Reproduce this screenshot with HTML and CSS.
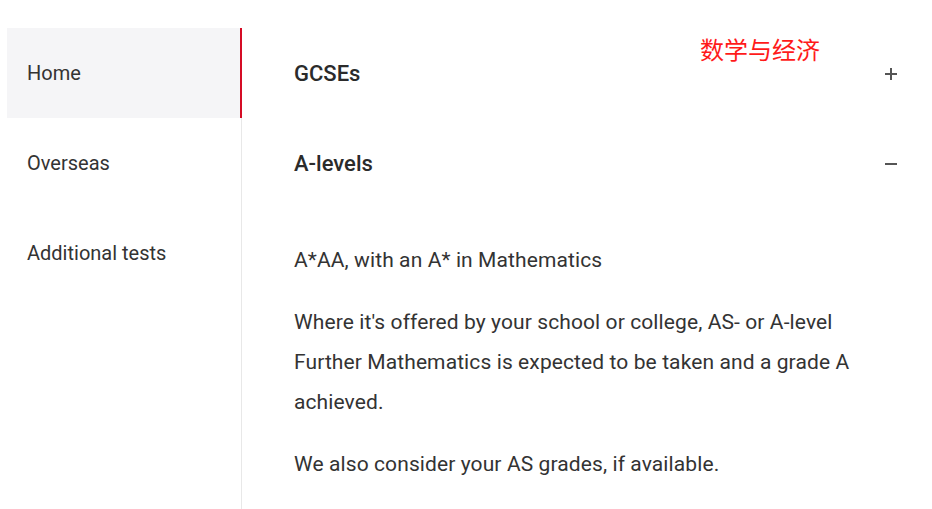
FILE: index.html
```html
<!DOCTYPE html>
<html lang="en">
<head>
    <meta charset="UTF-8">
    <meta name="viewport" content="width=device-width, initial-scale=1.0">
    <title>Entry requirements</title>
    <link rel="stylesheet" href="styles.css">
</head>
<body>
    <div id="page">
        <div id="sidebar">
            <div class="navitem active">Home</div>
            <div class="navitem">Overseas</div>
            <div class="navitem">Additional tests</div>
        </div>
        <div id="main">
            <div class="acc">
                <div class="acchd">
                    <span>GCSEs</span>
                    <span class="sign plus"></span>
                </div>
            </div>
            <div class="acc open">
                <div class="acchd">
                    <span>A-levels</span>
                    <span class="sign"></span>
                </div>
                <div class="accbody">
                    <p>A*AA, with an A* in Mathematics</p>
                    <p>Where it's offered by your school or college, AS- or A-level Further Mathematics is expected to be taken and a grade A achieved.</p>
                    <p>We also consider your AS grades, if available.</p>
                </div>
            </div>
            <div id="note">数学与经济</div>
        </div>
    </div>
</body>
</html>
```
FILE: styles.css
```css
body{
    margin: 0;
    font-family: Roboto, "Liberation Sans", sans-serif;
    color: #333;
    background: #fff;
}
#page{
    display: flex;
    padding: 28px 0 0 7px;
    min-height: 100vh;
    box-sizing: border-box;
}
#sidebar{
    width: 235px;
    flex-shrink: 0;
    border-right: 1px solid #e8e8e8;
    box-sizing: border-box;
}
.navitem{
    height: 90px;
    display: flex;
    align-items: center;
    padding-left: 20px;
    font-size: 20px;
}
.navitem.active{
    background-color: #f5f5f7;
    border-right: 2px solid #d50c25;
    margin-right: -1px;
}
#main{
    flex: 1;
    position: relative;
    padding: 0 35px 0 52px;
}
.acchd{
    height: 90px;
    display: flex;
    align-items: center;
    justify-content: space-between;
    font-size: 22px;
    font-weight: 500;
    color: #2b2b2b;
}
.sign{
    position: relative;
    width: 12px;
    height: 12px;
    margin-top: 1px;
}
.sign::before,.plus::after{
    content: "";
    position: absolute;
    background: #555;
}
.sign::before{
    left: 0;
    top: 5px;
    width: 12px;
    height: 2px;
}
.plus::after{
    left: 5px;
    top: 0;
    width: 2px;
    height: 12px;
}
.accbody{
    padding: 32px 25px 0 0;
}
.accbody p{
    margin: 0 0 22px;
    font-size: 21px;
    line-height: 40px;
    letter-spacing: 0.1px;
}
#note{
    position: absolute;
    left: 458px;
    top: 9px;
    font-family: "Noto Sans CJK SC", sans-serif;
    font-size: 24px;
    line-height: 1;
    color: #ff1a1a;
}
```
